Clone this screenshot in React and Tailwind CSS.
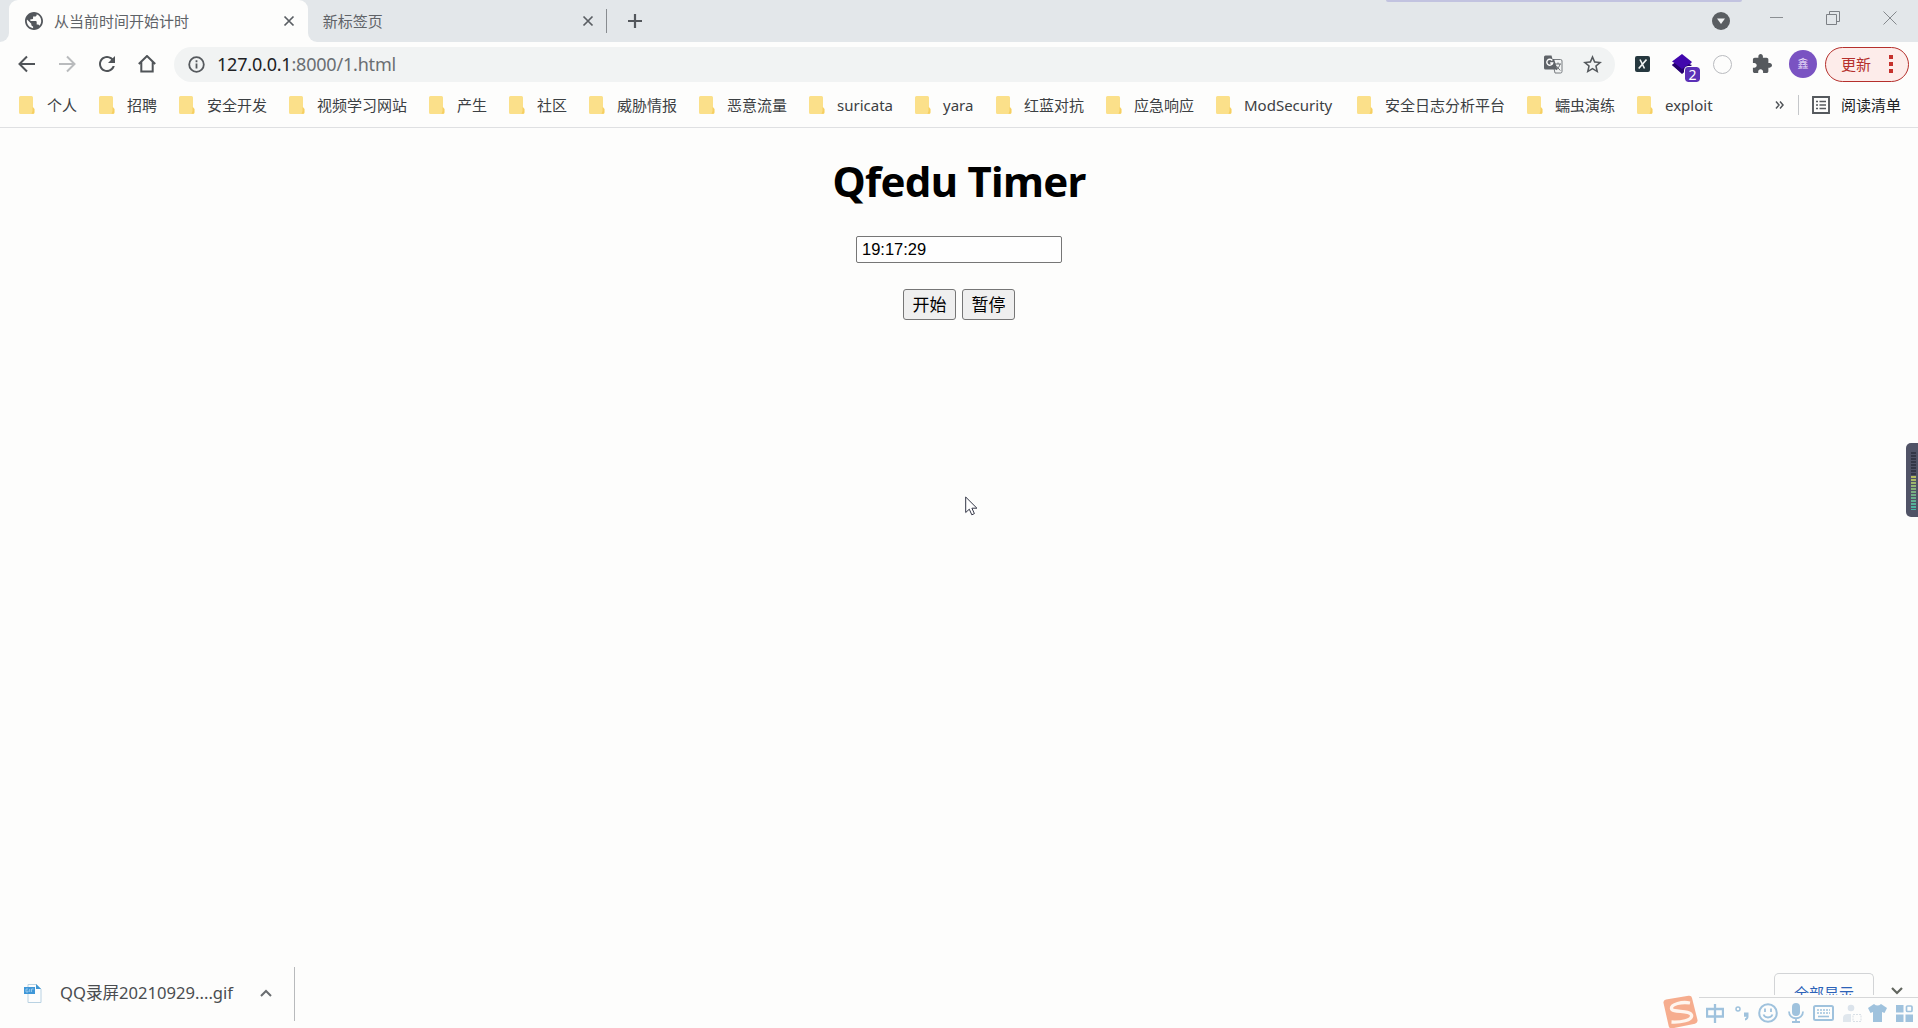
import React from "react";

const bookmarks = [
  ["个人", "w-[80px]"],
  ["招聘", "w-[80px]"],
  ["安全开发", "w-[110px]"],
  ["视频学习网站", "w-[140px]"],
  ["产生", "w-[80px]"],
  ["社区", "w-[80px]"],
  ["威胁情报", "w-[110px]"],
  ["恶意流量", "w-[110px]"],
  ["suricata", "w-[106px]"],
  ["yara", "w-[81px]"],
  ["红蓝对抗", "w-[110px]"],
  ["应急响应", "w-[110px]"],
  ["ModSecurity", "w-[141px]"],
  ["安全日志分析平台", "w-[170px]"],
  ["蠕虫演练", "w-[110px]"],
  ["exploit", "w-[80px]"],
];

function Svg({ w, h = w, className = "", children, box }) {
  return (
    <svg
      width={w}
      height={h}
      viewBox={box || `0 0 ${w} ${h}`}
      fill="none"
      className={`shrink-0 ${className}`}
    >
      {children}
    </svg>
  );
}

const Folder = () => (
  <Svg w={16} h={18}>
    <path d="M0 1.5Q0 0 1.5 0h11Q14 0 14 1.5V11l1.5 2v3.5Q15.500 18 14 18H1.500Q0 18 0 16.500z" fill="#fbe08a" />
    <path d="M13.500 11l1.800 2v3.500q0 1.200-1.300 1.200h-1.500q1.500-3 1-6.700z" fill="#f6cf62" />
  </Svg>
);

const Close = () => (
  <Svg w={12}>
    <path d="M1.500 1.500l9 9M10.500 1.500l-9 9" stroke="#5a5e63" strokeWidth="1.700" />
  </Svg>
);

function TabStrip() {
  return (
    <div className="flex h-[42px] shrink-0 bg-[#e3e7ea] text-[15px] text-[#5f6368]">
      <div className="flex h-full w-[9px] items-end bg-[#fdfdfc]">
        <div className="h-full w-full rounded-br-[9px] bg-[#e3e7ea]" />
      </div>
      <div className="flex h-full w-[299px] items-center rounded-t-[9px] bg-[#fdfdfc] pb-[1px] pl-[16px] pr-[13px]">
        <Svg w={18} box="2 2 20 20">
          <path
            fill="#53575c"
            d="M12 2C6.480 2 2 6.480 2 12s4.480 10 10 10 10-4.480 10-10S17.520 2 12 2zM4 12c0-.61.080-1.210.21-1.780L8.990 15v1c0 1.100.9 2 2 2v1.930C7.060 19.430 4 16.070 4 12zm13.890 5.400c-.26-.81-1-1.400-1.900-1.400h-1v-3c0-.55-.45-1-1-1h-6v-2h2c.55 0 1-.45 1-1V7h2c1.100 0 2-.9 2-2v-.410C17.920 5.770 20 8.650 20 12c0 2.080-.81 3.980-2.110 5.400z"
          />
        </Svg>
        <span className="ml-[11px] grow whitespace-nowrap pt-px">从当前时间开始计时</span>
        <Close />
      </div>
      <div className="flex h-full w-[9px] bg-[#fdfdfc]">
        <div className="h-full w-full rounded-bl-[9px] bg-[#e3e7ea]" />
      </div>
      <div className="flex w-[290px] items-center pb-[1px] pl-[6px] pr-[12px]">
        <span className="grow pt-px">新标签页</span>
        <Close />
      </div>
      <div className="mt-[9px] h-[24px] w-px bg-[#888c90]" />
      <div className="flex items-center pb-[1px] pl-[20px]">
        <Svg w={16}>
          <path d="M8 1v14M1 8h14" stroke="#53575c" strokeWidth="2.200" />
        </Svg>
      </div>
      <div className="ml-[743px] h-[2px] w-[356px] rounded-b-[2px] bg-[#c2c3e0]" />
      <div className="-ml-[30px] mt-[12px] flex h-[18px] w-[206px] items-start">
        <Svg w={18}>
          <circle cx="9" cy="9" r="9" fill="#5a5e62" />
          <path d="M5 6.500h8L9 12z" fill="#f1f3f4" />
        </Svg>
        <Svg w={13} className="ml-[40px] -mt-[1px]">
          <path d="M0 6.500h13" stroke="#8b8f93" />
        </Svg>
        <Svg w={14} className="ml-[43px] -mt-[1px]">
          <path d="M.5 3.500h10v10H.5zM3.500 3.500v-3h10v10h-3" stroke="#7c8085" />
        </Svg>
        <Svg w={14} className="ml-[43px] -mt-[1px]">
          <path d="M.5.5l13 13M13.500.5l-13 13" stroke="#85898d" />
        </Svg>
      </div>
    </div>
  );
}

function Toolbar() {
  return (
    <div className="flex h-[44px] shrink-0 items-center bg-[#fdfdfc]">
      <div className="flex w-[174px] items-center gap-[22px] pl-[18px]">
        <Svg w={18} box="3 3 18 18">
          <path d="M20 12H5M12 4.500L4.500 12l7.500 7.500" stroke="#505458" strokeWidth="2" />
        </Svg>
        <Svg w={18} box="3 3 18 18">
          <path d="M4 12h15M12 4.500l7.500 7.500-7.500 7.500" stroke="#b9bbbd" strokeWidth="2" />
        </Svg>
        <Svg w={18} box="3 3 18 18">
          <path fill="#505458" d="M17.650 6.350C16.200 4.900 14.210 4 12 4c-4.420 0-7.990 3.580-7.990 8s3.570 8 7.990 8c3.730 0 6.840-2.550 7.730-6h-2.080c-.82 2.330-3.040 4-5.650 4-3.310 0-6-2.690-6-6s2.690-6 6-6c1.660 0 3.140.69 4.220 1.780L13 11h7V4l-2.350 2.350z" />
        </Svg>
        <Svg w={18} box="3 3 18 18">
          <path d="M3.800 12L12 4l8.200 8M6.300 10v9.500h11.400V10" stroke="#505458" strokeWidth="2" />
        </Svg>
      </div>
      <div className="flex h-[35px] w-[1441px] items-center rounded-full bg-[#f1f3f3] pl-[14px] pr-[13px]">
        <Svg w={17}>
          <circle cx="8.500" cy="8.500" r="7.300" stroke="#55595d" strokeWidth="1.800" />
          <path d="M8.500 7.500v5M8.500 4.300v1.900" stroke="#55595d" strokeWidth="1.800" />
        </Svg>
        <div className="ml-[12px] grow text-[18px] tracking-[-0.200px] text-[#6a6e72]">
          <span className="text-[#202124]">127.0.0.1</span>:8000/1.html
        </div>
        <Svg w={19}>
          <path d="M8 4.500h8.500a1.500 1.500 0 011.500 1.500v10.500a1.500 1.500 0 01-1.500 1.500H11z" fill="#f1f3f3" stroke="#777b7f" />
          <path d="M1.500 0.500h6l1 3.500h1.500l3.500 10.500H1.500q-1.500 0-1.500-1.500V2q0-1.500 1.500-1.500z" fill="#5f6368" />
          <path d="M8.300 5.500A3 3 0 108.700 8H6.200" stroke="#fff" strokeWidth="1.400" />
          <path d="M11 9h6M14 7.500V9M16 9c-.5 2.500-2 4.500-4 6M12.300 11l4 4.500" stroke="#6a6e72" />
        </Svg>
        <Svg w={19} box="2 2 20 20" className="ml-[20px]">
          <path fill="#55595d" d="M22 9.240l-7.190-.62L12 2 9.190 8.630 2 9.240l5.460 4.730L5.820 21 12 17.270 18.180 21l-1.630-7.030L22 9.240zM12 15.400l-3.760 2.270 1-4.280-3.320-2.880 4.380-.38L12 6.100l1.710 4.040 4.380.38-3.320 2.880 1 4.280L12 15.400z" />
        </Svg>
      </div>
      <div className="flex grow items-center pl-[20px]">
        <div className="flex h-[16px] w-[15px] items-center justify-center rounded-[2px] bg-[#26383f]">
          <Svg w={9} h={10}>
            <path d="M2 .5L6.500 9.500M8.500 .5L.7 9.500" stroke="#f2f5f5" strokeWidth="1.600" />
          </Svg>
        </div>
        <div className="relative ml-[22px] h-[20px] w-[20px]">
          <Svg w={20}>
            <path d="M10 0l10 8-10 11L0 11l2.500-2L0 7.500z" fill="#4107ad" />
            <path d="M0 11l2.500-2L10 15l7-5 3 1-10 9z" fill="#260070" />
          </Svg>
          <div className="absolute left-[13px] top-[13px] flex h-[15px] w-[15px] items-center justify-center rounded-[3px] bg-[#5b30b7] text-[14px] leading-none text-white outline outline-1 outline-[#fdfdfc]">
            2
          </div>
        </div>
        <div className="ml-[21px] h-[19px] w-[19px] rounded-full border-[1.500px] border-[#b9bbbf]" />
        <Svg w={20} box="1 1 22 22" className="ml-[20px]">
          <path fill="#55595d" d="M20.500 11H19V7c0-1.100-.9-2-2-2h-4V3.500C13 2.120 11.880 1 10.500 1S8 2.120 8 3.500V5H4c-1.100 0-1.990.9-1.990 2v3.800H3.500c1.490 0 2.700 1.210 2.700 2.700s-1.210 2.700-2.700 2.700H2V20c0 1.100.9 2 2 2h3.800v-1.500c0-1.490 1.210-2.700 2.700-2.700 1.490 0 2.700 1.210 2.700 2.700V22H17c1.100 0 2-.9 2-2v-4h1.500c1.380 0 2.500-1.120 2.500-2.500S21.880 11 20.500 11z" />
        </Svg>
        <div className="ml-[17px] flex h-[28px] w-[28px] items-center justify-center rounded-full bg-[#7a53c2] text-[11px] text-[#e8dcf8]">
          鑫
        </div>
        <div className="ml-[8px] flex h-[35px] w-[84px] items-center rounded-full border-[1.500px] border-[#b5302c] bg-[#fdecea] pl-[15px] text-[15px] text-[#b5302c]">
          更新
          <Svg w={4} h={18} className="ml-[18px]">
            <path d="M0 0h4v4H0zM0 7h4v4H0zM0 14h4v4H0z" fill="#c5312c" />
          </Svg>
        </div>
      </div>
    </div>
  );
}

function BookmarksBar() {
  return (
    <div className="flex h-[42px] shrink-0 items-center border-b border-[#dfe0e2] bg-[#fdfdfc] pb-[3px] pl-[19px] text-[15px] text-[#3c4043]">
      {bookmarks.map(([label, width]) => (
        <div key={label} className={`flex shrink-0 items-center ${width}`}>
          <Folder />
          <span className="ml-[12px] whitespace-nowrap">{label}</span>
        </div>
      ))}
      <Svg w={9} h={8} className="ml-[58px]">
        <path d="M1 .5L4 4 1 7.500M5 .5L8 4 5 7.500" stroke="#505458" strokeWidth="1.500" />
      </Svg>
      <div className="ml-[14px] h-[20px] w-px bg-[#c5c7ca]" />
      <Svg w={18} className="ml-[13px]">
        <path d="M1 1h16v16H1z" stroke="#55595d" strokeWidth="1.900" />
        <path d="M4 5.500h2M4 9h2M4 12.500h2M7.500 5.500H14M7.500 9H14M7.500 12.500H14" stroke="#55595d" strokeWidth="1.600" />
      </Svg>
      <span className="ml-[11px] whitespace-nowrap text-[#202124]">阅读清单</span>
    </div>
  );
}

function TimerPage() {
  return (
    <main className="flex grow flex-col items-center pt-[26px] text-black">
      <h1 className="text-[42px] font-bold leading-[54px] tracking-[-0.700px]">Qfedu Timer</h1>
      <input
        readOnly
        value="19:17:29"
        className="mt-[28px] h-[27px] w-[206px] rounded-[2px] border border-[#767676] bg-[#fefefe] px-[5px] font-['Liberation_Sans',Arial,sans-serif] text-[16.500px] outline-none"
      />
      <div className="mt-[26px] flex gap-[6px] text-[17px]">
        <button className="flex h-[31px] w-[53px] items-center justify-center rounded-[3px] border border-[#767676] bg-[#efefef]">开始</button>
        <button className="flex h-[31px] w-[53px] items-center justify-center rounded-[3px] border border-[#767676] bg-[#efefef]">暂停</button>
      </div>
    </main>
  );
}

function DownloadShelf() {
  return (
    <footer className="flex h-[67px] shrink-0 items-start">
      <div className="flex h-[62px] w-[294px] items-center pl-[24px] pt-[2px]">
        <Svg w={18} h={19}>
          <path d="M4 .5h8.500L17 5v13.500H4z" fill="#fdfdfd" stroke="#b9d2e2" />
          <path d="M12 0l5 5h-5z" fill="#3f97d4" />
          <path d="M0 3h11v7H0z" fill="#3f97d8" />
          <path d="M4 5H2v3h2V6.500M5.700 5v3M7.500 8V5h2" stroke="#a9d3f0" strokeWidth=".8" />
        </Svg>
        <span className="ml-[18px] w-[175px] whitespace-nowrap text-[16.600px] text-[#4a4d50]">QQ录屏20210929....gif</span>
        <Svg w={12} h={8} className="ml-[25px]">
          <path d="M1 7l5-5 5 5" stroke="#6a6d70" strokeWidth="2" />
        </Svg>
      </div>
      <div className="mt-[6px] h-[54px] w-px bg-[#b8babc]" />
      <div className="ml-[1479px] mt-[12px] flex h-[22px] w-[100px] justify-center overflow-hidden rounded-t-[5px] border border-b-0 border-[#d2d4d6] pt-[9px] text-[15px] leading-[20px] text-[#2c62b8]">
        全部显示
      </div>
      <Svg w={12} h={8} className="ml-[17px] mt-[26px]">
        <path d="M1 1l5 5 5-5" stroke="#62665f" strokeWidth="2.200" />
      </Svg>
    </footer>
  );
}

function ImeBar() {
  return (
    <div className="absolute bottom-0 right-0 flex h-[33px] w-[254px] items-center">
      <Svg w={36} h={33} className="-ml-[1px]">
        <path d="M.5 8Q0 5 3 4.500L25.500.8Q28.500.3 29 3l5.500 22q.5 3-2.500 3.700L11 33H7.500q-1.300 0-1.700-1.500z" fill="#f6ad8e" />
        <path d="M27 8C19 6.500 8 9 8.500 13.500S27 14.500 28.500 20 17 27.500 8.500 27" stroke="#fff5ee" strokeWidth="3.300" />
      </Svg>
      <div className="flex h-[31px] grow items-center self-end border-t border-[#d6d7d8] bg-[#fdfdfc] pl-[7px] text-[#9fc2dd]">
        <Svg w={18} h={19}>
          <path d="M1 5h16v7.500H1zM9 0v19" stroke="currentColor" strokeWidth="2.300" />
        </Svg>
        <Svg w={15} h={16} className="ml-[11px]">
          <circle cx="3" cy="4" r="2" stroke="currentColor" strokeWidth="1.500" />
          <path d="M9 7.500h4.500v4q0 3-3.500 4v-2q1.500-.5 1.500-1.800H9z" fill="currentColor" />
        </Svg>
        <Svg w={20} className="ml-[8px]">
          <circle cx="10" cy="10" r="8.800" stroke="currentColor" strokeWidth="2" />
          <path d="M7 5.500v3.500M13 5.500v3.500M5.500 11.500c1.500 4 7.500 4 9 0" stroke="currentColor" strokeWidth="1.800" />
        </Svg>
        <Svg w={16} h={20} className="ml-[10px]">
          <rect x="4" y="0" width="8" height="13" rx="4" fill="currentColor" />
          <path d="M1 8.500c0 9 14 9 14 0M8 15v4M4 19h8" stroke="currentColor" strokeWidth="1.800" />
        </Svg>
        <Svg w={21} h={16} className="ml-[9px]">
          <rect x="1" y="1" width="19" height="14" rx="1.500" stroke="currentColor" strokeWidth="2" />
          <path d="M4 5h13M4 8h13" stroke="currentColor" strokeWidth="1.700" strokeDasharray="2 1" />
          <path d="M5 11.500h11" stroke="currentColor" strokeWidth="1.600" />
        </Svg>
        <Svg w={20} h={19} className="ml-[8px]">
          <circle cx="9" cy="4" r="3.300" fill="#dbe3eb" />
          <path d="M1 18v-4q0-4 5-4h3v8z" fill="#e0e7ed" />
          <path d="M11 10.500h8v7h-8z" stroke="#d9e0e6" strokeDasharray="2 1" />
        </Svg>
        <Svg w={19} h={18} className="ml-[6px]">
          <path d="M6 0q3.500 3 7 0l6 4-2.500 5-2.500-1v10H5V8L2.500 9 0 4z" fill="currentColor" />
        </Svg>
        <Svg w={17} h={17} className="ml-[9px]">
          <path d="M0 0h7.500v7.500H0zM0 9.500h7.500V17H0zM9.500 9.500H17V17H9.500z" fill="currentColor" />
          <rect x="10.500" y="1" width="5.500" height="5.500" rx="1" stroke="currentColor" strokeWidth="1.700" />
        </Svg>
      </div>
    </div>
  );
}

function LevelMeter() {
  return (
    <div className="absolute right-0 top-[443px] flex h-[74px] w-[12px] flex-col rounded-l-[5px] bg-[#505366] pl-[5px] pt-[9px]">
      <Svg w={6} h={58}>
        <defs>
          <linearGradient id="level" x1="0" y1="24" x2="0" y2="58" gradientUnits="userSpaceOnUse">
            <stop stopColor="#b9bd5d" />
            <stop offset=".5" stopColor="#76ad83" />
            <stop offset="1" stopColor="#45b3a5" />
          </linearGradient>
        </defs>
        <path d="M2.500 0v24" stroke="#343746" strokeWidth="5" strokeDasharray="2 1" />
        <path d="M0 24h5v34H0z" fill="url(#level)" />
        <path d="M0 26.500h5M0 29.500h5M0 32.500h5M0 35.500h5M0 38.500h5M0 41.500h5M0 44.500h5M0 47.500h5M0 50.500h5M0 53.500h5M0 56.500h5" stroke="#505366" />
      </Svg>
    </div>
  );
}

export default function App() {
  return (
    <div className="relative flex h-screen w-full flex-col overflow-hidden bg-[#fdfdfc] font-['Noto_Sans','Noto_Sans_CJK_SC',sans-serif]">
      <TabStrip />
      <Toolbar />
      <BookmarksBar />
      <TimerPage />
      <DownloadShelf />
      <ImeBar />
      <LevelMeter />
      <Svg w={13} h={20} className="absolute left-[965px] top-[496px]">
        <path d="M.7 1v15.500l3.600-3.300 2.500 5.600 2.600-1.200-2.500-5.400h5z" fill="#fff" stroke="#333646" />
      </Svg>
    </div>
  );
}
